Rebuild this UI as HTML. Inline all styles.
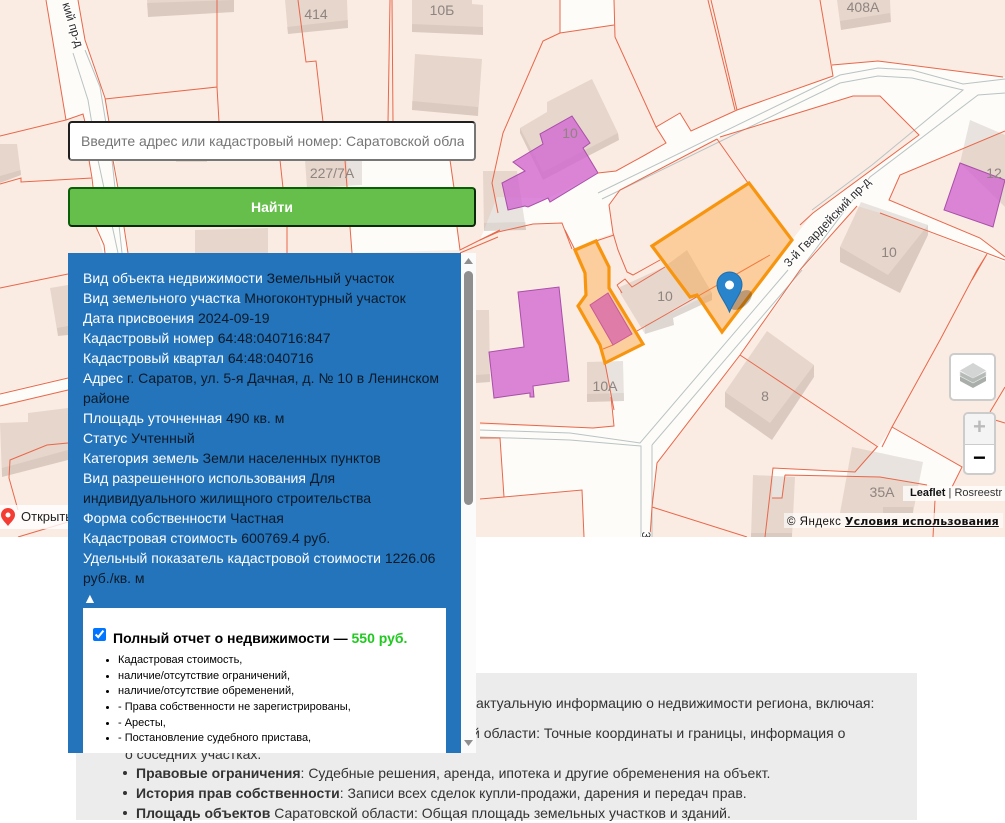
<!DOCTYPE html>
<html lang="ru"><head><meta charset="utf-8"><title>Кадастровая карта</title>
<style>
html,body{margin:0;padding:0;background:#fff}
body{width:1005px;height:820px;overflow:hidden;position:relative;font-family:"Liberation Sans",Arial,sans-serif}
.abs{position:absolute}
#map{left:0;top:0;width:1005px;height:537px;overflow:hidden}
svg text.n{font:14px "Liberation Sans",sans-serif;fill:#8e8480;text-anchor:middle}
svg text.r{font:12px "Liberation Sans",sans-serif;fill:#2d2d2d;stroke:#fff;stroke-width:2px;paint-order:stroke;text-anchor:middle}
.w{fill:#fdfcf8}.t{fill:#7a655a;opacity:.16}.s{fill:#6d5a50;opacity:.09}
.l{fill:none;stroke:#e8674a;stroke-width:1}
.g{fill:none;stroke:#b9c3c3;stroke-width:1}
.p{fill:#d060d0;fill-opacity:.75;stroke:#a84fa8;stroke-width:1}
.o{fill:#ff9d2e;fill-opacity:.38;stroke:#f7950f;stroke-width:3.2;stroke-linejoin:miter}
#sec{left:76px;top:673px;width:841px;height:147px;background:#ececec}
.tx{position:absolute;font-size:14px;line-height:20px;color:#333;white-space:nowrap}
.tx b{font-weight:bold}
.bu{position:absolute;left:123px;width:4px;height:4px;border-radius:50%;background:#333}
#inp{left:68px;top:121px;width:408px;height:40px;box-sizing:border-box;background:#fff;border:2px solid;border-color:#1f1f1f #767676 #767676 #1f1f1f;border-radius:4px;overflow:hidden}
#inp div{position:absolute;left:11px;top:0;width:383px;overflow:hidden;white-space:nowrap;font-size:14px;line-height:36px;color:#757575}
#btn{left:68px;top:187px;width:408px;height:40px;box-sizing:border-box;background:#66bf4a;border:2px solid;border-color:#0b5f0b #0a2a0a #0a2a0a #0b5f0b;border-radius:4px;color:#fff;font-size:14px;font-weight:bold;text-align:center;line-height:36px}
#panel{left:68px;top:253px;width:408px;height:500px;overflow:hidden;background:#2474bc}
#pt{position:absolute;left:15px;top:15px;width:363px;font-size:14px;line-height:20px;color:#0c1a28}
#pt span{color:#fff}
#sb{position:absolute;left:393px;top:0;width:15px;height:500px;background:#fbfbfb}
#th{position:absolute;left:3px;top:18px;width:9px;height:234px;background:#8f8f8f;border-radius:5px}
#box{position:absolute;left:15px;top:355px;width:363px;height:160px;background:#fff;color:#000}
#box h4{position:absolute;left:30px;top:20px;margin:0;font-size:14px;line-height:20px;white-space:nowrap;font-weight:bold}
#box h4 i{font-style:normal;color:#1fc91f}
#box input{position:absolute;left:10px;top:20px;margin:0;width:13px;height:13px}
.li{position:absolute;left:35px;font-size:11px;line-height:15px;white-space:nowrap}
.li:before{content:"";position:absolute;left:-12px;top:6px;width:3px;height:3px;border-radius:50%;background:#000}
.ctl{background:#fff;border:2px solid rgba(0,0,0,.2);border-radius:5px;box-sizing:border-box}
</style></head><body>

<div class="abs" id="map">
<svg width="1005" height="537" viewBox="0 0 1005 537" style="position:absolute;left:0;top:0">
<rect width="1005" height="537" fill="#fbece3"/>
<!-- white / road zones -->
<polygon class="w" points="46,0 78,0 85,40 105,98 130,260 105,260 96,227 91,178 83,114 66,120"/>
<polygon class="w" points="0,393 68,377 68,390 0,405"/>
<polygon class="w" points="560,0 614,0 614,25 560,33"/>
<polygon class="w" points="347,160 450,160 460,250 352,253"/>
<polygon class="w" points="497,197 548,198 598,173 616,171 645,155 666,143 656,127 680,113 691,131 737,110 833,76 833,65 878,61 1005,77 1005,131 900,175 889,200 980,238 1005,257 1005,262 880,213 857,206 802,270 740,355 657,463 652,507 650,537 480,537 480,425 593,428 614,426 605,363 643,344 637,331 697,295 722,332 792,240 813,213 919,135 880,96 853,96 720,137 620,190 609,205 613,233 572,249 562,223 533,224 498,232 480,240"/>
<polygon fill="#fbece3" points="480,438 500,438 504,497 480,499"/>
<polygon fill="#fbece3" points="480,500 582,490 584,537 480,537"/>
<polygon class="w" points="878,447 892,427 962,467 950,490 927,485 880,477 785,475 782,498 772,498 773,468 855,472"/>
<!-- road centre lines -->
<path class="g" d="M73,53L88,100L98,160L118,253M85,50L100,87L112,160L122,253"/>
<path class="g" d="M598,193L840,75L878,68L912,70L963,84L1005,79M602,199L840,83L878,76L912,78L963,90L872,165L812,210M1005,93L978,95L870,177L800,270"/>
<path class="g" d="M480,430L570,433L640,443L788,270M480,437L570,440L641,446L641,537M652,445L652,537M652,445L802,270"/>
<!-- buildings -->
<polygon class="t" points="147,0 234,0 234,12 148,17"/><polygon class="s" points="147,3 234,0 234,12 148,17"/>
<polygon class="t" points="285,0 347,0 348,28 288,34"/><polygon class="s" points="287,27 348,20 348,28 288,34"/>
<polygon class="t" points="412,0 472,0 472,4 483,5 483,35 412,32"/><polygon class="s" points="412,24 483,27 483,35 412,32"/>
<polygon class="t" points="415,54 482,59 478,116 412,110"/><polygon class="s" points="412,101 478,107 478,116 412,110"/>
<polygon class="t" points="837,0 890,0 891,22 841,30"/><polygon class="s" points="840,21 890,13 891,22 841,30"/>
<polygon class="t" points="305,160 362,160 362,185 307,188"/>
<polygon class="t" points="176,160 207,160 207,162 176,162"/>
<polygon class="t" points="483,171 517,171 526,230 484,231"/><polygon class="s" points="484,223 526,222 526,230 484,231"/>
<polygon class="t" points="195,230 268,228 268,253 195,253"/>
<polygon class="t" points="520,128 547,112 547,102 592,79 618,133 619,140 590,155 543,180 520,133"/><polygon class="s" points="520,128 543,172 618,133 619,140 590,155 543,180 520,133"/>
<polygon class="t" points="861,202 928,225 928,235 900,293 840,262 840,247"/><polygon class="s" points="928,225 928,235 900,293 840,262 840,247 888,275"/>
<polygon class="t" points="970,120 1005,135 1005,207 960,163"/>
<polygon class="t" points="620,287 664,267 687,250 712,293 712,300 673,318 674,325 645,334 620,293"/><polygon class="s" points="645,325 712,293 712,300 673,318 674,325 645,334"/>
<polygon class="t" points="587,362 623,361 624,401 587,402"/><polygon class="s" points="587,394 624,393 624,401 587,402"/>
<polygon class="t" points="476,310 489,310 490,382 476,383"/><polygon class="s" points="476,375 490,374 490,382 476,383"/>
<polygon class="t" points="767,331 814,365 814,377 772,440 725,407 725,392"/><polygon class="s" points="814,365 814,377 772,440 725,407 725,392 770,423"/>
<polygon class="t" points="852,447 923,462 913,513 840,513"/><polygon class="s" points="883,507 913,507 913,513 883,513"/>
<polygon class="t" points="753,475 795,477 792,537 751,537"/><polygon class="s" points="751,533 792,533 792,537 751,537"/>
<polygon class="t" points="0,144 17,144 21,175 0,183"/><polygon class="s" points="0,176 21,170 21,175 0,183"/>
<polygon class="t" points="50,288 68,285 68,335 58,336"/><polygon class="s" points="57,328 68,326 68,335 58,336"/>
<polygon class="t" points="0,423 28,422 28,413 68,408 68,460 2,477"/><polygon class="s" points="2,468 68,450 68,460 2,477"/>
<!-- purple -->
<polygon class="p" points="572,116 590,143 583,148 598,173 550,202 548,198 528,207 525,206 508,210 502,183 525,171 513,162 543,144 540,134"/>
<polygon class="p" points="518,292 559,287 569,381 533,386 534,397 530,397 530,393 494,398 489,352 524,347"/>
<polygon class="p" points="960,163 1005,180 993,227 944,210"/>
<!-- parcels -->
<path class="l" d="M46,0L66,120L0,136M66,120L83,114L85,122M78,0L85,40L105,98L109,122M105,99L217,87L217,0M217,87L219,122"/>
<path class="l" d="M89,160L92,178L21,182L21,178L0,184M92,178L93,187M113,160L118,188M96,227L104,245L105,253M124,227L128,253"/>
<path class="l" d="M298,0L306,62L316,61L323,122M280,160L283,188M287,227L287,253M345,160L347,187M350,227L352,253M390,0L388,122M392,0L393,122M450,160L454,188M457,227L460,250L500,230"/>
<path class="l" d="M460,253L498,237M480,240L498,232L533,224L562,223L572,249M560,0L560,33L543,41L503,133L492,183L498,213M560,33L614,25M614,0L615,37L656,127L680,113L691,131L737,110L833,76L820,0M708,0L735,110M711,0L737,110M832,65L878,61L1003,77"/>
<path class="l" d="M598,173L616,171L645,155L666,143L656,127M720,137L853,96L880,96L919,135L813,213L800,225M717,139L620,190L609,205L613,233L618,250L627,272L633,275L660,260M717,139L748,183"/>
<path class="l" d="M1005,131L900,175L889,200L980,238L1005,257M880,213L1005,260M987,254L972,280M857,206L800,270L740,355L657,463L652,507L650,537M740,355L878,447M882,447L892,427L940,340L977,270L987,254M892,427L962,467L952,487M877,447L855,472L773,468L765,537M785,475L880,477L927,485M785,475L782,498L772,498M935,500L933,537M652,507L747,537"/>
<path class="l" d="M1005,387L990,412M995,420L1005,423M565,230L575,250M596,241L614,235M603,349L613,345M614,410L605,363M617,285L625,279L632,287L665,267M617,285L622,293M637,331L770,255"/>
<path class="l" d="M480,423L593,428L614,426L611,397M480,438L500,438L504,497L480,499M504,497L582,490L584,537"/>
<path class="l" d="M0,288L68,274M0,394L68,378M0,406L68,390M68,443L47,445L10,460L9,478L18,510M68,522L18,537"/>
<!-- selected -->
<polygon class="o" points="652,246 749,183 792,240 722,332 697,295 690,297"/>
<polygon class="o" points="575,250 596,241 609,267 609,288 643,344 605,363 600,345 578,306 586,295 585,273"/>
<polygon fill="#e07ca8" stroke="#c85a96" points="590,305 608,293 632,334 613,345"/>
<!-- labels -->
<text class="n" x="316" y="19">414</text><text class="n" x="442" y="15">10Б</text><text class="n" x="332" y="178">227/7А</text>
<text class="n" x="570" y="138">10</text><text class="n" x="863" y="12">408А</text><text class="n" x="994" y="178">12</text>
<text class="n" x="889" y="257">10</text><text class="n" x="665" y="301">10</text><text class="n" x="605" y="391">10А</text>
<text class="n" x="765" y="401">8</text><text class="n" x="882" y="497">35А</text>
<text class="r" transform="translate(830,225) rotate(-46)">3-й Гвардейский пр-д</text>
<text class="r" transform="translate(69,26) rotate(73)">кий пр-д</text>
<text class="r" transform="translate(642,535) rotate(90)">3</text>
<!-- marker -->
<ellipse cx="741" cy="300" rx="13" ry="7" fill="#000" opacity=".25" transform="rotate(-40 741 300)"/>
<path d="M729.5,312C725,301 717,293 717,284.500A12.500,12.500 0 0 1 742,284.500C742,293 734,301 729.500,312Z" fill="#2a84cb" stroke="#1e6fae" stroke-width="1"/>
<circle cx="729.500" cy="285" r="4.500" fill="#fff"/>
<!-- yandex open pill -->
<rect x="0" y="505" width="68" height="24" fill="#fff" opacity=".8"/>
<path d="M8,526C5,522 1,519 1,515A7,7 0 0 1 15,515C15,519 11,522 8,526Z" fill="#f43c32"/><circle cx="8" cy="515" r="2.500" fill="#fff"/>
<text x="21" y="521" style="font:13px 'Liberation Sans',sans-serif" fill="#222">Открыть</text>
</svg>
<!-- layers control -->
<div class="abs ctl" style="left:949px;top:353px;width:47px;height:48px">
<svg width="43" height="44" viewBox="0 0 43 44" style="position:absolute;left:0;top:0">
<path d="M22,28L35,21.500L35,26L22,33L9,26L9,21.500Z" fill="#a9aeaa"/>
<path d="M22,23L35,16.500L35,21L22,28L9,21L9,16.500Z" fill="#b6bab7" stroke="#e8e8e8" stroke-width=".6"/>
<path d="M22,8L35,15.500L22,23L9,15.500Z" fill="#d2d5d3"/>
</svg></div>
<!-- zoom control -->
<div class="abs ctl" style="left:963px;top:412px;width:33px;height:63px;overflow:hidden">
<div style="height:30px;background:#f4f4f4;color:#bbb;font:bold 22px/30px 'Liberation Mono',monospace;text-align:center;border-bottom:1px solid #ccc">+</div>
<div style="height:29px;color:#000;font:bold 22px/29px 'Liberation Mono',monospace;text-align:center">−</div>
</div>
<div class="abs" style="left:903px;top:486px;width:102px;height:15px;background:rgba(255,255,255,.75);font-size:11px;line-height:15px;color:#333;padding-left:7px;box-sizing:border-box;white-space:nowrap"><b style="color:#111">Leaflet</b> | Rosreestr</div>
<div class="abs" style="left:784px;top:513px;width:219px;height:15px;background:rgba(255,255,255,.6);line-height:15px;white-space:nowrap;color:#111;padding-left:3px;box-sizing:border-box"><span style="font-size:11.500px;letter-spacing:.5px">© Яндекс </span><b style="font:bold 11px 'DejaVu Sans',sans-serif;text-decoration:underline;letter-spacing:.12px">Условия использования</b></div>
</div>

<div class="abs" id="sec"></div>
<div class="tx" style="left:476px;top:693px">актуальную информацию о недвижимости региона, включая:</div>
<div class="tx" style="left:472px;top:723px">й области: Точные координаты и границы, информация о</div>
<div class="tx" style="left:125px;top:744px">о соседних участках.</div>
<div class="bu" style="top:771px"></div><div class="tx" style="left:136px;top:763px"><b>Правовые ограничения</b>: Судебные решения, аренда, ипотека и другие обременения на объект.</div>
<div class="bu" style="top:791px"></div><div class="tx" style="left:136px;top:783px"><b>История прав собственности</b>: Записи всех сделок купли-продажи, дарения и передач прав.</div>
<div class="bu" style="top:811px"></div><div class="tx" style="left:136px;top:803px"><b>Площадь объектов</b> Саратовской области: Общая площадь земельных участков и зданий.</div>

<div class="abs" id="inp"><div>Введите адрес или кадастровый номер: Саратовской области</div></div>
<div class="abs" id="btn">Найти</div>

<div class="abs" id="panel">
<div id="pt">
<span>Вид объекта недвижимости</span> Земельный участок<br>
<span>Вид земельного участка</span> Многоконтурный участок<br>
<span>Дата присвоения</span> 2024-09-19<br>
<span>Кадастровый номер</span> 64:48:040716:847<br>
<span>Кадастровый квартал</span> 64:48:040716<br>
<span>Адрес</span> г. Саратов, ул. 5-я Дачная, д. № 10 в Ленинском районе<br>
<span>Площадь уточненная</span> 490 кв. м<br>
<span>Статус</span> Учтенный<br>
<span>Категория земель</span> Земли населенных пунктов<br>
<span>Вид разрешенного использования</span> Для индивидуального жилищного строительства<br>
<span>Форма собственности</span> Частная<br>
<span>Кадастровая стоимость</span> 600769.4 руб.<br>
<span>Удельный показатель кадастровой стоимости</span> 1226.06 руб./кв. м<br>
<span>▲</span>
</div>
<div id="box">
<input type="checkbox" checked>
<h4>Полный отчет о недвижимости — <i>550 руб.</i></h4>
<div class="li" style="top:45px">Кадастровая стоимость,</div>
<div class="li" style="top:61px">наличие/отсутствие ограничений,</div>
<div class="li" style="top:76px">наличие/отсутствие обременений,</div>
<div class="li" style="top:92px">- Права собственности не зарегистрированы,</div>
<div class="li" style="top:108px">- Аресты,</div>
<div class="li" style="top:123px">- Постановление судебного пристава,</div>
</div>
<div id="sb">
<svg width="15" height="500" style="position:absolute;left:0;top:0"><path d="M7.500,5L12,11H3Z" fill="#8f8f8f"/><path d="M7.500,493L12,487H3Z" fill="#8f8f8f"/></svg>
<div id="th"></div>
</div>
</div>
</body></html>
